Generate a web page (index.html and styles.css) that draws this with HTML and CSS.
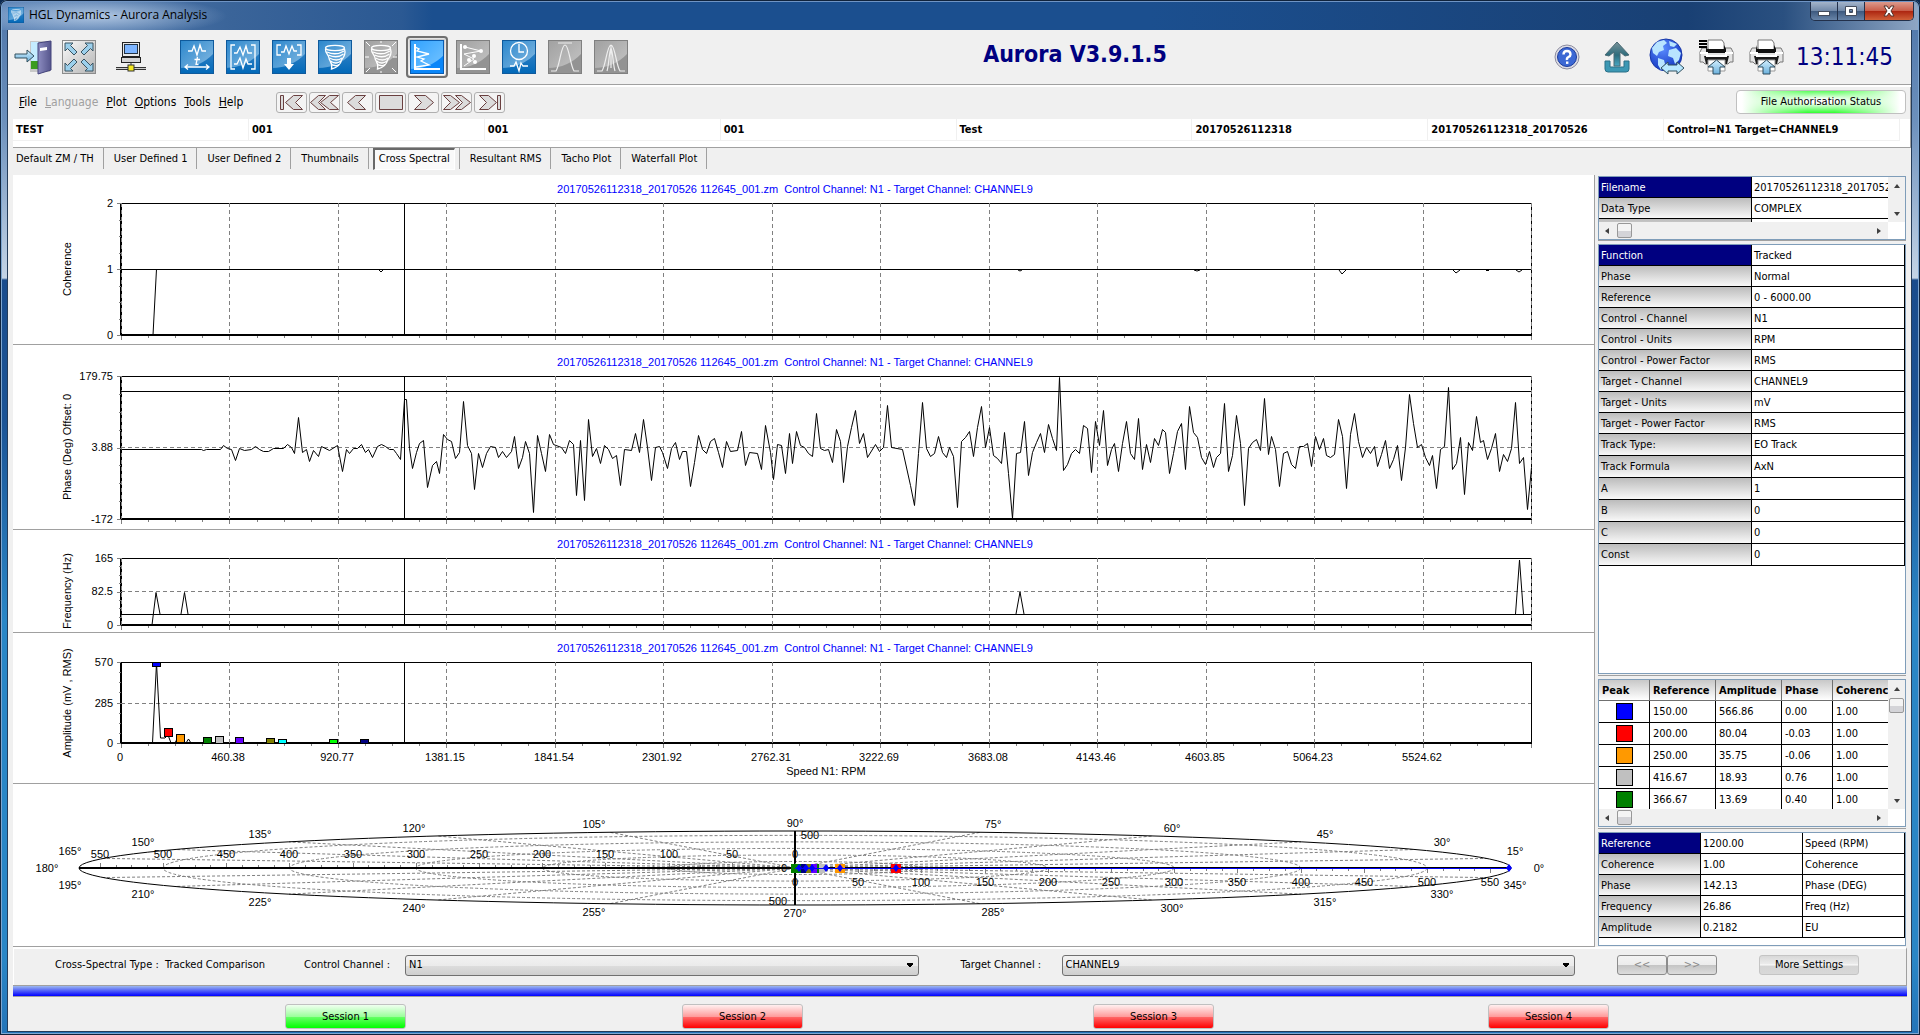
FILE: index.html
```html
<!DOCTYPE html>
<html lang="en">

<head>
    <meta charset="UTF-8">
    <meta name="viewport" content="width=device-width, initial-scale=1.0">
    <title>HGL Dynamics - Aurora Analysis</title>
    <link rel="stylesheet" href="styles.css">
</head>

<body>
    <!-- shared icon parts -->
    <svg class="defs" width="0" height="0" aria-hidden="true">
        <defs>
            <linearGradient id="blueLight" x1="0" y1="0" x2="1" y2="1">
                <stop offset="0" stop-color="#2a86cc"/><stop offset="1" stop-color="#8ebfe4"/>
            </linearGradient>
            <linearGradient id="blueDark" x1="0" y1="0" x2="0" y2="1">
                <stop offset="0" stop-color="#2c7fc4"/><stop offset="1" stop-color="#0068b8"/>
            </linearGradient>
            <linearGradient id="greyLight" x1="0" y1="0" x2="1" y2="1">
                <stop offset="0" stop-color="#a0a0a0"/><stop offset="1" stop-color="#c8c8c8"/>
            </linearGradient>
            <linearGradient id="hotLight" x1="0" y1="0" x2="1" y2="1">
                <stop offset="0" stop-color="#2ea0ff"/><stop offset="1" stop-color="#7cc8ff"/>
            </linearGradient>
            <linearGradient id="arrowBlue" x1="0" y1="0" x2="0" y2="1">
                <stop offset="0" stop-color="#d4f0ff"/><stop offset="1" stop-color="#6ab0dc"/>
            </linearGradient>
            <linearGradient id="teal" x1="0" y1="0" x2="0" y2="1">
                <stop offset="0" stop-color="#7a9298"/><stop offset="0.55" stop-color="#2c6c7c"/><stop offset="1" stop-color="#48a8c4"/>
            </linearGradient>
            <radialGradient id="globe" cx="0.4" cy="0.3" r="0.8">
                <stop offset="0" stop-color="#5a8cff"/><stop offset="1" stop-color="#0a2cb8"/>
            </radialGradient>
            <linearGradient id="panel" x1="0" y1="0" x2="1" y2="1">
                <stop offset="0" stop-color="#fafafa"/><stop offset="1" stop-color="#b4b4b4"/>
            </linearGradient>
            <linearGradient id="door" x1="0" y1="0" x2="1" y2="0">
                <stop offset="0" stop-color="#8c8cc0"/><stop offset="1" stop-color="#55558c"/>
            </linearGradient>
        </defs>
        <symbol id="tileBlue" viewBox="0 0 34 34">
            <rect width="34" height="34" fill="url(#blueLight)"/>
            <path d="M0 28Q20 28 34 13V34H0Z" fill="url(#blueDark)"/>
            <rect x=".5" y=".5" width="33" height="33" fill="none" stroke="#0f5a9c"/>
        </symbol>
        <symbol id="tileGrey" viewBox="0 0 34 34">
            <rect width="34" height="34" fill="url(#greyLight)"/>
            <path d="M0 28Q20 28 34 13V34H0Z" fill="#939393"/>
            <rect x=".5" y=".5" width="33" height="33" fill="none" stroke="#808080"/>
        </symbol>
        <symbol id="tileHot" viewBox="0 0 34 34">
            <rect width="34" height="34" fill="url(#hotLight)"/>
            <path d="M0 29Q20 29 34 15V34H0Z" fill="#0a86f8"/>
            <rect x=".5" y=".5" width="33" height="33" fill="none" stroke="#0a5cb0"/>
        </symbol>
        <symbol id="tornado" viewBox="0 0 34 34">
            <g fill="none" stroke="#fff" stroke-width="1.3">
                <ellipse cx="17" cy="8" rx="9.5" ry="2.6"/>
                <path d="M7.5 9C7 13 11 15 11 18S15 22 13.500 29C19 28 23 24 23.500 20 27 16 27.500 12 26.500 9"/>
                <path d="M9 12Q18 16 26 11M10.500 15Q19 19 25.500 14M11.500 18Q19 22 24 18M12.500 21Q18 25 23 21M13.500 24.500Q18 27 21 24.500"/>
            </g>
        </symbol>
        <symbol id="printer" viewBox="0 0 36 36">
            <path d="M9 1H23L25 4V12H9Z" fill="#fff" stroke="#777"/>
            <path d="M3 9H9V13H26V9H32L34 13V23H31L29 25H6L4 23H1V13Z" fill="#e4e4e4" stroke="#777"/>
            <path d="M8 6V10H25V6L27 10V14H7V10Z" fill="#111"/>
            <path d="M5 17H30L28 25H7Z" fill="#1a1a1a"/>
            <path d="M1 14H8V17H27V14H34" fill="none" stroke="#fff" stroke-width="2"/>
            <path d="M9 21H26V32H9Z" fill="#fff" stroke="#999"/>
            <path d="M17.500 21L26 28H21V35H14V28H9Z" fill="url(#arrowBlue)" stroke="#2c4a5c"/>
        </symbol>
    </svg>

    <div class="window">
        <header class="titlebar">
            <svg class="app-icon" viewBox="0 0 34 34"><use href="#tileBlue"/><use href="#tornado"/></svg>
            <span class="caption">HGL Dynamics - Aurora Analysis</span>
            <div class="window-buttons">
                <button aria-label="Minimise"><svg width="12" height="12"><rect x=".5" y="6.500" width="11" height="4" fill="#fff" stroke="#444c5c"/></svg></button>
                <button aria-label="Maximise"><svg width="12" height="12"><path d="M.5 1.500H11.500V10.500H.5ZM4.500 4.500H7.500V7.500H4.500Z" fill="#fff" stroke="#444c5c" fill-rule="evenodd"/></svg></button>
                <button class="close" aria-label="Close"><svg width="12" height="12"><path d="M1 1H4L6 4 8 1H11L8 6 11 11H8L6 8 4 11H1L4 6Z" fill="#fff" stroke="#54342c"/></svg></button>
            </div>
        </header>

        <div class="client">
            <!-- toolbar -->
            <div class="toolbar">
                <button class="tool" aria-label="Exit"><svg width="38" height="36" viewBox="0 0 38 36">
                    <rect x="16" y="2" width="20" height="31" fill="#c8c8c8"/>
                    <rect x="17" y="3" width="8" height="19" fill="#c4ecff"/><rect x="17" y="22" width="8" height="8" fill="#3c9c20"/>
                    <path d="M24 4L37 2V31L24 35Z" fill="url(#door)" stroke="#44447c"/>
                    <path d="M26 9L33 8V11L26 12Z" fill="#fff"/>
                    <path d="M1 15H13V11L20 17 13 23V19H1Z" fill="url(#arrowBlue)" stroke="#33505e"/>
                </svg></button>
                <button class="tool" aria-label="Full screen"><svg width="34" height="34" viewBox="0 0 34 34">
                    <rect x=".5" y=".5" width="33" height="33" fill="url(#panel)" stroke="#8c8c8c"/>
                    <g fill="#9cd0ec" stroke="#3a5462">
                        <path d="M3 3H11L8.500 5.500 15 12 12 15 5.500 8.500 3 11Z"/>
                        <path d="M31 3H23L25.500 5.500 19 12 22 15 28.500 8.500 31 11Z"/>
                        <path d="M3 31H11L8.500 28.500 15 22 12 19 5.500 25.500 3 23Z"/>
                        <path d="M31 31H23L25.500 28.500 19 22 22 19 28.500 25.500 31 23Z"/>
                    </g>
                </svg></button>
                <button class="tool network" aria-label="Network"><svg width="30" height="32" viewBox="0 0 30 32">
                    <rect x="6.500" y="1.500" width="17" height="14" fill="#e8e8e8" stroke="#222"/>
                    <rect x="8.500" y="3.500" width="13" height="9" fill="#7cb4ff" stroke="#234"/>
                    <rect x="5.500" y="16.500" width="19" height="5" fill="#d4d4d4" stroke="#222"/>
                    <path d="M15 22V25M0 26.500H30M0 28.500H30" stroke="#333"/>
                    <path d="M0 27.500H30" stroke="#ccc"/>
                    <rect x="12" y="24" width="6" height="6" fill="#f4e820" stroke="#333"/>
                </svg></button>
                <button class="tool first-tile" aria-label="Time trace"><svg width="34" height="34" viewBox="0 0 34 34"><use href="#tileBlue"/>
                    <path d="M8 11H12L14 6 17 15 20 5 22 11H26M5 27H29M8 24.500L5 27 8 29.500M26 24.500L29 27 26 29.500M17.500 17L16 24.500H18.500M14.500 19.500H20" fill="none" stroke="#fff" stroke-width="1.300"/>
                </svg></button>
                <button class="tool" aria-label="Block traces"><svg width="34" height="34" viewBox="0 0 34 34"><use href="#tileBlue"/>
                    <path d="M9 5H5V29H9M25 5H29V29H25M8 13H11L14 7 17 15 20 6 22 13H26M8 24H11L14 18 17 28 20 19 22 24H26" fill="none" stroke="#fff" stroke-width="1.300"/>
                </svg></button>
                <button class="tool" aria-label="Export block"><svg width="34" height="34" viewBox="0 0 34 34"><use href="#tileBlue"/>
                    <path d="M9 5H5V15H9M25 5H29V15H25M9 12H12L14 6 17 14 20 6 22 11H25" fill="none" stroke="#fff" stroke-width="1.300"/>
                    <path d="M15 18H19V24H22L17 30 12 24H15Z" fill="#fff"/>
                </svg></button>
                <button class="tool" aria-label="Waterfall"><svg width="34" height="34" viewBox="0 0 34 34"><use href="#tileBlue"/><use href="#tornado"/></svg></button>
                <button class="tool" aria-label="Waterfall burst" disabled><svg width="34" height="34" viewBox="0 0 34 34"><use href="#tileGrey"/><use href="#tornado"/>
                    <path d="M2 2L6 6M32 2L28 6M2 32L6 28M32 32L28 28M1 17H5M29 17H33M17 1V3M17 31V33" stroke="#fff"/>
                </svg></button>
                <button class="tool selected" aria-label="Cross spectral"><svg width="34" height="34" viewBox="0 0 34 34"><use href="#tileHot"/>
                    <path d="M5 4V29H30" fill="none" stroke="#fff" stroke-width="2"/>
                    <path d="M5 7L9 9 7 11 19 14 7 17 14 19 11 21 19 25 6 27" fill="none" stroke="#fff" stroke-width="1.300"/>
                </svg></button>
                <button class="tool" aria-label="Scatter" disabled><svg width="34" height="34" viewBox="0 0 34 34"><use href="#tileGrey"/>
                    <path d="M5 4V29H30" fill="none" stroke="#fff" stroke-width="2"/>
                    <path d="M9 7L25 11 8 14 18 19 8 26" fill="none" stroke="#fff"/>
                    <g fill="#fff"><circle cx="9" cy="7" r="2"/><circle cx="25" cy="11" r="2"/><circle cx="18" cy="16" r="2"/><circle cx="13" cy="20" r="2"/><circle cx="19" cy="22" r="2"/></g>
                </svg></button>
                <button class="tool" aria-label="Clock trace"><svg width="34" height="34" viewBox="0 0 34 34"><use href="#tileBlue"/>
                    <circle cx="17" cy="11" r="8.500" fill="none" stroke="#fff" stroke-width="1.300"/>
                    <path d="M17 4V12H22M8 26H12L14 22 17 31 19 23 21 26H26" fill="none" stroke="#fff" stroke-width="1.300"/>
                </svg></button>
                <button class="tool" aria-label="Peak" disabled><svg width="34" height="34" viewBox="0 0 34 34"><use href="#tileGrey"/>
                    <path d="M3 31H8C12 25 13 5 17 5S22 25 26 31H31M10 3H24" fill="none" stroke="#eee" stroke-width="1.200"/>
                </svg></button>
                <button class="tool" aria-label="Peak centre" disabled><svg width="34" height="34" viewBox="0 0 34 34"><use href="#tileGrey"/>
                    <path d="M3 31H8C12 25 13 5 17 5S22 25 26 31H31M17 5V28M13 31C15 25 15 12 17 8 19 12 19 25 21 31" fill="none" stroke="#eee" stroke-width="1.200"/>
                </svg></button>

                <h1>Aurora V3.9.1.5</h1>

                <div class="tools-right">
                    <button class="tool" aria-label="Help"><svg width="26" height="26" viewBox="0 0 26 26">
                        <circle cx="13" cy="13" r="12" fill="#dcdce4" stroke="#8c8ca0"/><circle cx="13" cy="13" r="9.500" fill="#3c68d4" stroke="#1c3c9c"/>
                        <path d="M9.500 10.500Q9.500 7 13 7T16.500 10.500Q16.500 12 14.500 13T13 16" fill="none" stroke="#fff" stroke-width="2.400"/><rect x="12" y="17.500" width="2.400" height="2.400" fill="#fff"/>
                    </svg></button>
                    <button class="tool" aria-label="Upload"><svg width="26" height="32" viewBox="0 0 26 32">
                        <path d="M13 1L25 14L21 15 16 11V25H10V11L5 15 1 14Z" fill="url(#teal)" stroke="#4a6a74"/>
                        <path d="M1 20H6V26H20V20H25V28Q25 31 22 31H4Q1 31 1 28Z" fill="#3c98b4" stroke="#2a7088"/>
                    </svg></button>
                    <button class="tool" aria-label="Web update"><svg width="36" height="38" viewBox="0 0 36 38">
                        <circle cx="17" cy="17" r="16" fill="url(#globe)" stroke="#1838a8"/>
                        <path d="M3 10L8 4 15 2 18 5 14 8 15 12 10 14 8 18 4 15ZM20 3L28 6 25 9 21 8ZM20 12L27 10 32 15 30 22 26 26 24 20 19 18ZM9 20L15 22 16 26 12 32 9 27Z" fill="#b8e4ff"/>
                        <path d="M12 30L19 24V27H28V24L35 30 28 36V33H19V36Z" fill="#b8e8ff" stroke="#33505e"/>
                    </svg></button>
                    <button class="tool" aria-label="Print report"><svg width="36" height="36" viewBox="0 0 36 36"><use href="#printer"/><path d="M0 2H8M0 5H8M0 8H8" stroke="#000" stroke-width="2"/></svg></button>
                    <button class="tool" aria-label="Print"><svg width="36" height="36" viewBox="0 0 36 36"><use href="#printer"/></svg></button>
                    <time class="clock">13:11:45</time>
                </div>
            </div>

            <!-- menu and playback -->
            <div class="menubar">
                <nav>
                    <a href="#"><u>F</u>ile</a>
                    <a href="#" class="disabled"><u>L</u>anguage</a>
                    <a href="#"><u>P</u>lot</a>
                    <a href="#"><u>O</u>ptions</a>
                    <a href="#"><u>T</u>ools</a>
                    <a href="#"><u>H</u>elp</a>
                </nav>
                <div class="playback">
                    <button aria-label="First"><svg viewBox="0 0 29 19"><path d="M3.500 2.500H6.500V16.500H3.500ZM16.500 2.500H25.500L18.500 9.500 25.500 16.500H16.500L8.500 9.500Z"/></svg></button>
                    <button aria-label="Fast back"><svg viewBox="0 0 29 19"><path d="M8.500 2.500H15.500L8.500 9.500 15.500 16.500H8.500L.5 9.500ZM19.500 2.500H28.500L20.500 9.500 28.500 16.500H19.500L10.500 9.500Z"/></svg></button>
                    <button aria-label="Back"><svg viewBox="0 0 29 19"><path d="M12.500 2.500H22.500L15.500 9.500 22.500 16.500H12.500L4.500 9.500Z"/></svg></button>
                    <button aria-label="Stop"><svg viewBox="0 0 29 19"><path d="M3.500 2.500H26.500V16.500H3.500Z"/></svg></button>
                    <button aria-label="Forward"><svg viewBox="0 0 29 19"><path d="M5.500 2.500H16.500L24.500 9.500 16.500 16.500H5.500L12.500 9.500Z"/></svg></button>
                    <button aria-label="Fast forward"><svg viewBox="0 0 29 19"><path d="M1.500 2.500H8.500L17.500 9.500 8.500 16.500H1.500L8.500 9.500ZM13.500 2.500H19.500L28.500 9.500 19.500 16.500H13.500L20.500 9.500Z"/></svg></button>
                    <button aria-label="Last"><svg viewBox="0 0 29 19"><path d="M4.500 2.500H13.500L21.500 9.500 13.500 16.500H4.500L11.500 9.500ZM22.500 2.500H25.500V16.500H22.500Z"/></svg></button>
                </div>
                <button class="auth">File Authorisation Status</button>
            </div>

            <div class="info">
                <span>TEST</span><span>001</span><span>001</span><span>001</span><span>Test</span><span>20170526112318</span><span>20170526112318_20170526</span><span>Control=N1 Target=CHANNEL9</span>
            </div>

            <nav class="tabs">
                <button>Default ZM / TH</button>
                <button>User Defined 1</button>
                <button>User Defined 2</button>
                <button>Thumbnails</button>
                <button class="active"><span>Cross Spectral</span></button>
                <button>Resultant RMS</button>
                <button>Tacho Plot</button>
                <button>Waterfall Plot</button>
            </nav>

            <main>
                <section class="charts">
                    <svg id="coherence" viewBox="0 0 1581 169"></svg>
                    <svg id="phase" viewBox="0 0 1581 184"></svg>
                    <svg id="frequency" viewBox="0 0 1581 102"></svg>
                    <svg id="amplitude" viewBox="0 0 1581 150"></svg>
                    <svg id="polar" viewBox="0 0 1581 162"></svg>
                </section>

                <aside>
                    <div class="pane scroll-pane file-pane">
                        <div class="clip">
                            <table class="props">
                                <tr class="current"><th>Filename</th><td>20170526112318_20170526</td></tr>
                                <tr><th>Data Type</th><td>COMPLEX</td></tr>
                                <tr><th></th><td></td></tr>
                            </table>
                        </div>
                        <div class="vbar"><i class="up"></i><i class="down"></i></div>
                        <div class="hbar"><i class="left"></i><b></b><i class="right"></i></div>
                    </div>

                    <div class="pane function-pane">
                        <table class="props">
                            <tr class="current"><th>Function</th><td>Tracked</td></tr>
                            <tr><th>Phase</th><td>Normal</td></tr>
                            <tr><th>Reference</th><td>0 - 6000.00</td></tr>
                            <tr><th>Control - Channel</th><td>N1</td></tr>
                            <tr><th>Control - Units</th><td>RPM</td></tr>
                            <tr><th>Control - Power Factor</th><td>RMS</td></tr>
                            <tr><th>Target - Channel</th><td>CHANNEL9</td></tr>
                            <tr><th>Target - Units</th><td>mV</td></tr>
                            <tr><th>Target - Power Factor</th><td>RMS</td></tr>
                            <tr class="tall"><th>Track Type:</th><td>EO Track</td></tr>
                            <tr class="tall"><th>Track Formula</th><td>AxN</td></tr>
                            <tr class="tall"><th>A</th><td>1</td></tr>
                            <tr class="tall"><th>B</th><td>0</td></tr>
                            <tr class="tall"><th>C</th><td>0</td></tr>
                            <tr class="tall"><th>Const</th><td>0</td></tr>
                        </table>
                    </div>

                    <div class="pane scroll-pane peak-pane">
                        <div class="clip">
                            <table class="peaks">
                                <thead><tr><th class="w51">Peak</th><th class="w66">Reference</th><th class="w66">Amplitude</th><th class="w51">Phase</th><th class="w66">Coherence</th></tr></thead>
                                <tbody>
                                    <tr><td><i class="swatch blue"></i></td><td>150.00</td><td>566.86</td><td>0.00</td><td>1.00</td></tr>
                                    <tr><td><i class="swatch red"></i></td><td>200.00</td><td>80.04</td><td>-0.03</td><td>1.00</td></tr>
                                    <tr><td><i class="swatch orange"></i></td><td>250.00</td><td>35.75</td><td>-0.06</td><td>1.00</td></tr>
                                    <tr><td><i class="swatch silver"></i></td><td>416.67</td><td>18.93</td><td>0.76</td><td>1.00</td></tr>
                                    <tr><td><i class="swatch green"></i></td><td>366.67</td><td>13.69</td><td>0.40</td><td>1.00</td></tr>
                                </tbody>
                            </table>
                        </div>
                        <div class="vbar"><i class="up"></i><b></b><i class="down"></i></div>
                        <div class="hbar"><i class="left"></i><b></b><i class="right"></i></div>
                    </div>

                    <div class="pane values-pane">
                        <table class="props three">
                            <tr class="current"><th>Reference</th><td>1200.00</td><td>Speed (RPM)</td></tr>
                            <tr><th>Coherence</th><td>1.00</td><td>Coherence</td></tr>
                            <tr><th>Phase</th><td>142.13</td><td>Phase (DEG)</td></tr>
                            <tr><th>Frequency</th><td>26.86</td><td>Freq (Hz)</td></tr>
                            <tr><th>Amplitude</th><td>0.2182</td><td>EU</td></tr>
                        </table>
                    </div>
                </aside>
            </main>

            <div class="controls">
                <span class="type">Cross-Spectral Type :&nbsp; Tracked Comparison</span>
                <label for="control">Control Channel :</label>
                <select id="control"><option>N1</option></select>
                <label for="target" class="target-label">Target Channel :</label>
                <select id="target"><option>CHANNEL9</option></select>
                <div class="pager">
                    <button disabled>&lt;&lt;</button>
                    <button disabled>&gt;&gt;</button>
                </div>
                <button class="more">More Settings</button>
            </div>

            <div class="progress"></div>

            <footer class="sessions">
                <button class="on">Session 1</button>
                <button>Session 2</button>
                <button>Session 3</button>
                <button>Session 4</button>
            </footer>
        </div>
    </div>

    <script src="script.js"></script>
</body>

</html>
```
FILE: styles.css
```css
* {
    box-sizing: border-box;
}

body {
    margin: 0;
    font: 11px/14px "DejaVu Sans Condensed", "Open Sans", sans-serif;
    color: #000;
    background: #0c2a50;
}

button,
select {
    font: inherit;
    color: inherit;
    padding: 0;
    margin: 0;
    border: none;
    background: none;
}

table {
    border-spacing: 0;
    table-layout: fixed;
}

th,
td {
    padding: 0;
    text-align: left;
    font-weight: normal;
}

.defs {
    position: absolute;
}

/* window frame */
.window {
    min-height: 100vh;
    display: flex;
    flex-direction: column;
    padding: 0 8px 3px 7px;
    border-radius: 7px 7px 0 0;
    background: linear-gradient(#4c74a8 0, #6c90bc 120px, #c4d4e6 278px, #1a4c8c 280px, #1c5496 420px, #2a86c6 620px, #2a86c6 960px, #2474b8 100%);
    box-shadow: inset 0 0 0 1px #10233c, inset 0 0 0 2px #7ea6d0;
}

.titlebar {
    display: flex;
    align-items: center;
    height: 29px;
    margin: 1px -6px 0 -5px;
    padding: 0 0 2px 6px;
    border-radius: 6px 6px 0 0;
    border-top: 1px solid #6f94c4;
    background: radial-gradient(ellipse 130px 20px at 95px 14px, rgba(200, 218, 240, 0.8), rgba(200, 218, 240, 0) 100%), linear-gradient(90deg, #5f86b8, #3a6499 230px, #2b5993 400px, #1b4f8f 430px, #1b4f8f 60%, #194074 88%, #2a5080 93%, #8ea6c4 100%);
}

.app-icon {
    width: 16px;
    height: 16px;
}

.caption {
    flex: 1;
    margin-left: 5px;
    font: 12px/16px "Open Sans", sans-serif;
}

.window-buttons {
    display: flex;
    align-self: flex-start;
    border: 1px solid #22304a;
    border-top: none;
    border-radius: 0 0 5px 5px;
    overflow: hidden;
    margin-right: 4px;
}

.window-buttons button {
    width: 27px;
    height: 18px;
    display: flex;
    align-items: center;
    justify-content: center;
    border-right: 1px solid #22304a;
    background: linear-gradient(#a4b4ca, #7088a8 50%, #3c587e 50%, #6884a8);
}

.window-buttons .close {
    width: 48px;
    border-right: none;
    background: linear-gradient(#dc9a8c, #c85c48 50%, #ac2410 50%, #d06038);
}

.client {
    flex: 1;
    display: flex;
    flex-direction: column;
    background: #f0f0f0;
    border: 1px solid #243c5a;
    border-top: none;
}

/* toolbar */
.toolbar {
    display: flex;
    align-items: center;
    gap: 4px;
    height: 57px;
    padding: 0 19px 1px 4px;
    border-bottom: 2px solid #fff;
    box-shadow: inset 0 -1px #a0a0a0;
}

.tool {
    width: 42px;
    height: 42px;
    display: flex;
    align-items: center;
    justify-content: center;
    border-radius: 4px;
}

.tool.selected {
    background: linear-gradient(#c8c8c8, #fff);
    box-shadow: inset 0 0 0 2px #707070, inset 0 0 0 3px #e4e4e4;
}

.network {
    margin-left: 6px;
}

.first-tile {
    margin-left: 20px;
}

h1 {
    flex: 1;
    margin: 0;
    padding: 0 28px 6px 0;
    font-size: 23px;
    line-height: 28px;
    text-align: center;
    color: #000080;
}

.tools-right {
    display: flex;
    align-items: center;
    gap: 8px;
}

.clock {
    width: 96px;
    font-size: 24px;
    line-height: 28px;
    color: #000080;
}

/* menu row */
.menubar {
    display: flex;
    align-items: center;
    height: 32px;
    padding: 0 4px 2px 11px;
    border-right: 1px solid #a0a0a0;
}

.menubar nav {
    display: flex;
    gap: 8px;
    width: 257px;
    font-size: 12px;
    line-height: 16px;
}

.menubar a {
    color: #000;
    text-decoration: none;
}

.menubar .disabled {
    color: #a0a0a0;
}

.playback {
    display: flex;
    gap: 2px;
    flex: 1;
}

.playback button {
    width: 31px;
    height: 21px;
    border: 1px solid #b0b0b0;
    border-radius: 3px;
    background: #f4f4f4;
}

.playback svg {
    display: block;
    width: 29px;
    height: 19px;
    fill: #dcdcdc;
    stroke: #6a4040;
}

.auth {
    width: 170px;
    height: 24px;
    border: 1px solid #c0c0c0;
    border-radius: 4px;
    background: radial-gradient(ellipse 100px 13px at 50% 45%, #fff 15%, rgba(255, 255, 255, 0)), linear-gradient(90deg, #fff 3%, #20ff20 42%, #20ff20 58%, #fff 97%);
}

.info {
    display: flex;
    height: 29px;
    margin-left: 5px;
    padding-right: 10px;
    background: #fff;
    border-right: 1px solid #a0a0a0;
    border-bottom: 1px solid #a0a0a0;
    font-weight: bold;
}

.info span {
    flex: 1;
    height: 22px;
    padding: 4px 3px 2px;
    border-right: 1px solid #f0f0f0;
    border-bottom: 1px solid #f0f0f0;
}

.tabs {
    display: flex;
    height: 27px;
}

.tabs button {
    height: 21px;
    padding: 0 9px 0 10px;
    border-right: 1px solid #a0a0a0;
}

.tabs button:first-child {
    padding-left: 8px;
}

.tabs .active {
    padding: 0 4px;
}

.tabs .active span {
    display: block;
    padding: 2px 4px 3px;
    border: 1px solid #fff;
    border-top: 2px solid #696969;
    border-left: 2px solid #696969;
    background: #fafafa;
}

/* charts and side panes */
main {
    display: grid;
    grid-template-columns: 1fr 309px;
    gap: 2px;
    padding: 0 5px;
}

.charts {
    background: #fff;
    border-right: 1px solid #a0a0a0;
}

.charts svg {
    display: block;
    width: 100%;
    height: auto;
    box-sizing: content-box;
    border-bottom: 1px solid #a0a0a0;
    font: 11px "Liberation Sans", Arial, sans-serif;
    overflow: hidden;
}

.charts text {
    fill: #000;
    dominant-baseline: central;
    white-space: pre;
}

.charts .title {
    fill: #0000ff;
    text-anchor: middle;
}

.middle {
    text-anchor: middle;
}

.end {
    text-anchor: end;
}

.line {
    fill: none;
    stroke: #000;
    stroke-width: 1;
    shape-rendering: crispEdges;
}

.trace {
    fill: none;
    stroke: #000;
    stroke-width: 1;
}

.thick {
    stroke-width: 2;
}

.grid {
    fill: none;
    stroke: #808080;
    stroke-dasharray: 4 3;
    shape-rendering: crispEdges;
}

.tick {
    stroke: #808080;
    shape-rendering: crispEdges;
}

.net {
    fill: none;
    stroke: #808080;
    stroke-dasharray: 3 2;
}

.marker {
    stroke: #000;
    shape-rendering: crispEdges;
}

aside {
    display: flex;
    flex-direction: column;
    padding: 1px 0 1px 1px;
}

.pane {
    border: 1px solid #7f9db9;
    background: #fff;
}

.file-pane {
    height: 64px;
}

.function-pane {
    flex: 1;
    margin: 4px 0 5px;
    box-shadow: 0 -3px #f0f0f0, 0 -4px #a0a0a0;
}

.peak-pane {
    height: 148px;
    box-shadow: 0 -3px #f0f0f0, 0 -4px #a0a0a0;
}

.values-pane {
    height: 114px;
    margin-top: 5px;
    box-shadow: 0 -3px #f0f0f0, 0 -4px #a0a0a0;
}

.scroll-pane {
    display: grid;
    grid-template-columns: 1fr 17px;
    grid-template-rows: 1fr 17px;
}

.clip {
    overflow: hidden;
    min-height: 0;
}

.props {
    width: 100%;
}

.clip .props {
    width: 306px;
}

.props th,
.props td {
    height: 21px;
    padding: 1px 2px 0;
    white-space: nowrap;
    overflow: hidden;
    border-right: 1px solid #000;
    border-bottom: 1px solid #000;
}

.props th {
    background: linear-gradient(#bcbcbc, #f8f8f8);
}

.props .tall th,
.props .tall td {
    height: 22px;
}

.props .current th {
    color: #fff;
    background: #000080;
}

.peaks {
    width: 300px;
}

.peaks th {
    height: 21px;
    padding: 1px 3px 0;
    font-weight: bold;
    border-right: 1px solid #707070;
    border-bottom: 1px solid #707070;
    background: linear-gradient(#c8c8c8, #fff);
}

.peaks td {
    height: 22px;
    padding: 0 3px;
    border-right: 1px solid #000;
    border-bottom: 1px solid #000;
}

.w51 {
    width: 51px;
}

.w66 {
    width: 66px;
}

.swatch {
    display: block;
    width: 17px;
    height: 17px;
    margin: 0 auto;
    border: 1px solid #000;
}

.blue {
    background: #0000ff;
}

.red {
    background: #ff0000;
}

.orange {
    background: #ff9900;
}

.silver {
    background: #c0c0c0;
}

.green {
    background: #008000;
}

/* scroll bars */
.vbar,
.hbar {
    display: flex;
    align-items: center;
    background: #f0f0f0;
}

.vbar {
    flex-direction: column;
    padding: 7px 0 6px;
}

.hbar {
    padding: 0 7px 0 6px;
}

.vbar b,
.hbar b {
    width: 15px;
    height: 15px;
    border: 1px solid #989898;
    border-radius: 2px;
    background: linear-gradient(#f4f4f4 50%, #d4d4d8 50%);
}

.vbar b {
    margin-top: 7px;
}

.hbar b {
    margin-left: 8px;
}

.up,
.down,
.left,
.right {
    border: 3px solid transparent;
}

.up {
    border-top: none;
    border-bottom: 4px solid #404040;
}

.down {
    margin-top: auto;
    border-bottom: none;
    border-top: 4px solid #404040;
}

.left {
    border-left: none;
    border-right: 4px solid #404040;
}

.right {
    margin-left: auto;
    border-right: none;
    border-left: 4px solid #404040;
}

/* channel controls */
.controls {
    display: flex;
    align-items: center;
    height: 38px;
    margin: 0 4px 0 5px;
    padding: 0 47px 4px 41px;
    border-top: 2px solid #fff;
    border-left: 1px solid #fff;
    border-right: 1px solid #a0a0a0;
}

.controls .type {
    width: 249px;
}

.controls label {
    width: 101px;
}

.controls .target-label {
    margin-left: 42px;
}

.controls select {
    flex: 1;
    height: 21px;
    padding: 0 3px;
    appearance: none;
    border: 1px solid #707070;
    border-radius: 3px;
    background-image: conic-gradient(from -36deg at 50% 100%, #000 72deg, transparent 0), linear-gradient(#f2f2f2, #ebebeb 50%, #dddddd 50%, #cfcfcf);
    background-repeat: no-repeat;
    background-size: 8px 5px, 100% 100%;
    background-position: right 4px center, 0 0;
}

.pager {
    display: flex;
    margin: 0 42px;
}

.pager button,
.more {
    width: 50px;
    height: 20px;
    border: 1px solid #8c8c8c;
    border-radius: 3px;
    background: linear-gradient(#f4f4f4, #ececec 50%, #c4c4c4 50%, #dcdcdc);
}

.pager button {
    color: #8c8c8c;
}

.more {
    width: 100px;
    border-color: #c4c4c4;
    background: linear-gradient(#d8d8d8, #ececec 45%, #fff 50%, #d4d4d4 55%, #d8d8d8);
}

.progress {
    height: 12px;
    margin: 0 4px 0 5px;
    border-top: 1px solid #a0a0a0;
    border-bottom: 1px solid #a0a0a0;
    background: linear-gradient(#9cb8f0, #0000ff);
}

.sessions {
    display: grid;
    grid-template-columns: 397fr 411fr 395fr 121fr;
    padding: 7px 302px 2px 277px;
}

.sessions button {
    width: 121px;
    height: 25px;
    border: 1px solid #c0c0c0;
    border-radius: 3px;
    background: linear-gradient(#fff0f0, #ff9c9c 50%, #ff6c6c 50%, #ff0000);
}

.sessions .on {
    background: linear-gradient(#f0fff0, #9cff9c 50%, #6cff6c 50%, #00ff00);
}
```
FILE: script.js
```js
const TITLE = '20170526112318_20170526 112645_001.zm  Control Channel: N1 - Target Channel: CHANNEL9';
const LEFT = 108;
const RIGHT = 1518;
const STEP = (RIGHT - LEFT) / 13;
const CURSOR = 391;

function add(parent, tag, attrs, text) {
    const node = document.createElementNS('http://www.w3.org/2000/svg', tag);
    for (const key in attrs) node.setAttribute(key, attrs[key]);
    if (text !== undefined) node.textContent = text;
    parent.appendChild(node);
    return node;
}

function path(svg, cls, d) {
    return add(svg, 'path', { class: cls, d: d });
}

// frame, grid lines, ticks and axis texts that the four upper charts share
function drawAxes(svg, opt) {
    const { top, bottom, labels, name, titleY } = opt;
    const mid = labels[1][1];

    path(svg, 'line', `M${LEFT} ${top + 0.5}H${RIGHT}`);
    path(svg, 'line thick', `M${LEFT} ${bottom}H${RIGHT + 1}`);
    path(svg, 'line thick', `M${LEFT} ${top}V${bottom}`);
    path(svg, 'line', `M${RIGHT + 0.5} ${top}V${bottom}`);

    for (let i = 0; i <= 52; i++) {
        const x = Math.round(LEFT + i * STEP / 4) + 0.5;
        path(svg, 'tick', `M${x} ${bottom + 1}v${i % 4 ? 2 : 4}`);
        if (i % 4 === 0 && i > 0 && i < 52) path(svg, 'grid', `M${x} ${top}V${bottom}`);
    }
    if (opt.dashedSides) path(svg, 'grid', `M${LEFT + 0.5} ${top}V${bottom}M${RIGHT + 0.5} ${top}V${bottom}`);
    path(svg, 'grid', `M${LEFT} ${mid + 0.5}H${RIGHT}`);

    for (let i = 0; i <= 8; i++) {
        const y = Math.round(top + (bottom - top) * i / 8) + 0.5;
        path(svg, 'tick', `M${LEFT - (i % 4 ? 2 : 4)} ${y}H${LEFT}`);
    }
    labels.forEach(([text, y]) => add(svg, 'text', { x: 100, y: y, class: 'end' }, text));

    add(svg, 'text', { x: 54, y: mid, class: 'middle', transform: `rotate(-90 54 ${mid})` }, name);
    add(svg, 'text', { x: 782, y: titleY, class: 'title' }, TITLE);
    path(svg, 'line', `M${CURSOR + 0.5} ${top}V${bottom}`);
}

function drawCoherence() {
    const svg = document.getElementById('coherence');
    drawAxes(svg, { top: 28, bottom: 160, labels: [['2', 28], ['1', 94], ['0', 160]], name: 'Coherence', titleY: 14, dashedSides: true });
    path(svg, 'line', `M${LEFT} 94.5H${RIGHT}`);
    path(svg, 'trace', 'M140 160L143.500 94M366 95l2 2 2-2M1005 95l2 1 2-1M1181 95l3 1 3-1M1326 95l3 4 4-4M1440 95l3 3 4-3M1473 95.500h3M1503 95l3 2 3-2');
}

// x from the left axis, y from the top of the frame
const PHASE = [
    0,73, 80,73, 82,74, 85,73, 99,73, 102,69, 106,72, 110,73, 114,84, 118,72, 123,74, 130,73, 134,70, 138,73, 142,75, 147,75,
    152,72, 162,72, 166,68, 170,71, 173,77, 177,41, 181,76, 185,73, 188,85, 192,74, 197,80, 200,70, 208,74, 216,69, 221,95,
    225,73, 228,77, 232,72, 236,72, 240,68, 244,76, 247,73, 251,81, 256,70, 260,68, 264,70, 268,73, 272,73, 275,77, 279,83,
    283,23, 285,23, 288,72, 291,92, 295,76, 298,67, 302,64, 306,111, 311,89, 315,85, 318,97, 322,58, 326,63, 330,65, 334,82,
    338,76, 342,25, 346,69, 350,77, 353,113, 357,77, 361,91, 365,77, 369,70, 374,71, 377,81, 381,75, 385,81, 390,75, 393,60,
    397,92, 401,81, 404,65, 408,77, 412,136, 416,59, 420,77, 424,95, 428,58, 432,68, 440,71, 444,77, 448,64, 452,68, 455,119,
    459,64, 463,124, 467,43, 471,80, 475,72, 479,87, 483,69, 487,73, 491,82, 495,79, 499,109, 503,73, 510,74, 514,57, 518,76,
    522,43, 526,71, 530,104, 534,71, 538,70, 541,76, 546,92, 550,72, 554,66, 558,83, 561,75, 565,75, 569,110, 573,86, 577,59,
    581,73, 585,77, 589,65, 593,62, 597,76, 601,91, 605,65, 609,75, 616,74, 620,55, 624,89, 628,76, 636,77, 640,93, 644,49,
    649,76, 652,103, 656,68, 660,69, 664,97, 668,57, 671,87, 675,55, 679,69, 683,71, 687,77, 691,80, 695,37, 699,72, 703,74,
    707,73, 711,86, 715,53, 719,65, 722,106, 726,70, 730,51, 734,34, 738,67, 742,57, 746,81, 754,68, 758,75, 762,71, 766,29,
    770,71, 781,73, 789,109, 793,129, 797,77, 801,26, 805,72, 809,80, 813,77, 817,60, 821,76, 825,81, 828,71, 832,80, 836,131,
    840,65, 844,61, 848,55, 852,80, 856,51, 860,30, 864,71, 868,51, 872,79, 876,82, 880,87, 883,56, 887,97, 891,142, 895,77,
    899,76, 903,45, 907,99, 911,76, 915,66, 919,57, 923,76, 927,48, 931,62, 935,74, 938,1, 942,94, 946,88, 950,77, 954,73,
    958,77, 962,49, 966,52, 970,96, 974,45, 978,69, 982,34, 986,89, 990,73, 993,67, 997,95, 1001,67, 1005,45, 1009,77,
    1013,83, 1017,42, 1021,93, 1025,68, 1029,86, 1033,62, 1037,69, 1041,53, 1044,56, 1048,97, 1052,77, 1056,55, 1060,47,
    1064,93, 1068,30, 1072,56, 1076,61, 1080,81, 1084,88, 1088,75, 1092,91, 1095,81, 1099,77, 1103,27, 1107,95, 1111,79,
    1115,39, 1119,67, 1123,129, 1127,72, 1131,66, 1135,63, 1139,74, 1143,22, 1147,78, 1150,60, 1154,73, 1158,110, 1162,77,
    1166,75, 1170,88, 1174,92, 1178,70, 1182,70, 1186,67, 1190,90, 1194,60, 1198,73, 1202,62, 1205,79, 1209,81, 1213,78,
    1217,43, 1221,60, 1225,112, 1229,58, 1233,37, 1237,65, 1241,81, 1245,71, 1249,77, 1253,70, 1256,90, 1260,78, 1264,64,
    1268,92, 1272,83, 1276,69, 1280,104, 1284,71, 1288,18, 1292,47, 1296,71, 1300,68, 1304,81, 1308,89, 1311,79, 1315,112,
    1319,73, 1323,70, 1327,11, 1331,93, 1335,87, 1339,61, 1343,118, 1347,66, 1351,74, 1355,40, 1359,66, 1362,64, 1366,83,
    1370,72, 1374,57, 1378,95, 1382,78, 1386,85, 1390,72, 1394,26, 1398,87, 1402,81, 1406,133, 1410,91
];

function drawPhase() {
    const svg = document.getElementById('phase');
    drawAxes(svg, { top: 31, bottom: 174, labels: [['179.75', 31], ['3.88', 102], ['-172', 174]], name: 'Phase (Deg) Offset: 0', titleY: 17, dashedSides: true });
    path(svg, 'line', `M${LEFT} 46.5H${RIGHT}`);
    add(svg, 'polyline', { class: 'trace', points: PHASE.join(' '), transform: `translate(${LEFT + 0.5} 31.5)` });
}

function drawFrequency() {
    const svg = document.getElementById('frequency');
    drawAxes(svg, { top: 28, bottom: 95, labels: [['165', 28], ['82.5', 61], ['0', 95]], name: 'Frequency (Hz)', titleY: 14, dashedSides: true });
    path(svg, 'line', `M${LEFT} 84.5H${RIGHT}`);
    path(svg, 'trace', 'M139 95L143 62.500 147 84M168 84L171.500 62.500 175 84M1003 84L1007 62 1011 84M1502.500 84L1506.500 30 1510.500 84');
}

function drawAmplitude() {
    const svg = document.getElementById('amplitude');
    drawAxes(svg, { top: 29, bottom: 110, labels: [['570', 29], ['285', 70], ['0', 110]], name: 'Amplitude (mV , RMS)', titleY: 15 });
    path(svg, 'trace', 'M139.500 110L143.500 30 147.500 105H152L155 102 158 110M162 110L164 106M173 110L175.500 106 178 110');
    [
        [139, 29, 4, '#0000ff'], [151, 95, 8, '#ff0000'], [163, 101, 8, '#ff9900'], [190, 104, 6, '#008000'], [202, 103, 7, '#c0c0c0'],
        [222, 104, 6, '#6600ff'], [253, 105, 5, '#808000'], [265, 106, 4, '#00ffff'], [316, 106, 4, '#00ff00'], [347, 106, 4, '#000080']
    ].forEach(([x, y, h, fill]) => add(svg, 'rect', { x: x + 0.5, y: y + 0.5, width: 8, height: h, fill: fill, class: 'marker' }));

    ['0', '460.38', '920.77', '1381.15', '1841.54', '2301.92', '2762.31', '3222.69', '3683.08', '4143.46', '4603.85', '5064.23', '5524.62']
        .forEach((text, i) => add(svg, 'text', { x: Math.round(LEFT + i * STEP) - 1, y: 124, class: 'middle' }, text));
    add(svg, 'text', { x: 813, y: 138, class: 'middle' }, 'Speed N1: RPM');
}

function drawPolar() {
    const svg = document.getElementById('polar');
    const cx = 782;
    const cy = 84;
    const rx = 716;
    const ry = 37;
    const scale = 1.264;

    for (let r = 100; r <= 500; r += 100) {
        add(svg, 'ellipse', { cx: cx, cy: cy, rx: r * scale, ry: r * ry / 567, class: 'net' });
    }
    for (let a = 15; a < 360; a += 15) {
        if (a % 90 === 0) continue;
        const rad = a * Math.PI / 180;
        path(svg, 'net', `M${cx} ${cy}L${cx + rx * Math.cos(rad)} ${cy - ry * Math.sin(rad)}`);
    }
    add(svg, 'ellipse', { cx: cx, cy: cy, rx: rx, ry: ry, class: 'trace' });
    path(svg, 'line thick', `M${cx - rx} ${cy}H${cx + rx}M${cx} ${cy - ry}V${cy + ry}`);

    // radius scale: above the axis to the left, below it to the right
    for (let v = 0; v <= 550; v += 12.5) {
        const dx = Math.round(v * scale);
        const len = v % 50 ? 2 : 4;
        path(svg, 'tick', `M${cx - dx + 0.5} ${cy - 1}v${-len}M${cx + dx + 0.5} ${cy + 1}v${len}`);
        if (v % 50 === 0) {
            add(svg, 'text', { x: cx - dx, y: 70, class: 'middle' }, v);
            add(svg, 'text', { x: cx + dx, y: 98, class: 'middle' }, v);
        }
    }
    add(svg, 'text', { x: 771, y: 84, class: 'middle' }, '0');
    add(svg, 'text', { x: 797, y: 51, class: 'middle' }, '500');
    add(svg, 'text', { x: 765, y: 117, class: 'middle' }, '500');

    // angle labels keep a little clear of the rim
    const lift = [0, 17, 26, 34, 40, 44, 45];
    for (let a = 0; a < 360; a += 15) {
        const q = a % 180 > 90 ? 180 - a % 180 : a % 180;
        const cos = Math.cos(a * Math.PI / 180);
        const sin = Math.abs(Math.sin(a * Math.PI / 180));
        let x = cx;
        if (a % 180 !== 90) x += cos > 0 ? 744 * cos + 6 * sin : 748 * cos - 8 * sin;
        const y = cy + (a < 180 ? -1 : 1) * lift[q / 15];
        add(svg, 'text', { x: Math.round(x), y: y, class: 'middle' }, a + '°');
    }

    [[883, '#ff0000'], [827, '#ff9900'], [807, '#c0c0c0'], [801, '#008000'], [799, '#6600ff'], [793, '#808000'], [788, '#000080'], [783, '#008000']]
        .forEach(([x, fill]) => add(svg, 'rect', { x: x - 5, y: cy - 4, width: 10, height: 9, fill: fill }));
    path(svg, 'line', `M${cx} ${cy + 0.5}H${cx + rx}`).style.stroke = '#0000ff';
    [1496, 883, 827, 813, 799, 793, 786].forEach(x => path(svg, '', `M${x} ${cy - 4}L${x + 3} ${cy} ${x} ${cy + 4} ${x - 3} ${cy}Z`).setAttribute('fill', '#0000ff'));
}

drawCoherence();
drawPhase();
drawFrequency();
drawAmplitude();
drawPolar();
```
